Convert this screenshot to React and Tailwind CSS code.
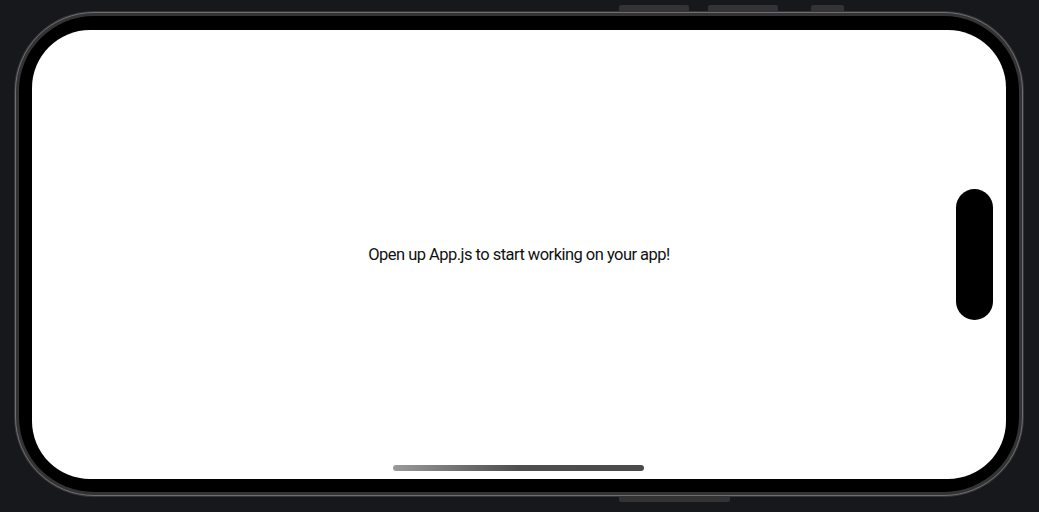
export default function App() {
  return (
    <div className="w-[1039px] h-[512px] bg-[#17181b] overflow-hidden relative pt-[11px] pl-[14px]">
      {/* hardware buttons on the frame edges */}
      <div className="absolute top-[5px] left-[619px] flex items-end">
        <div className="w-[70px] h-[7px] rounded-t-[2px] bg-[#333336]" />
        <div className="w-[70px] h-[7px] rounded-t-[2px] bg-[#333336] ml-[19px]" />
        <div className="w-[33px] h-[7px] rounded-t-[2px] bg-[#333336] ml-[33px]" />
      </div>
      <div className="absolute top-[496px] left-[619px] w-[111px] h-[6px] rounded-b-[2px] bg-[#333336]" />
      <div className="w-[1010px] h-[486px] rounded-[80px] bg-[#353537] p-[1px]">
        <div className="w-full h-full rounded-[79px] border border-[#6e6e70] bg-[#333335] p-[3px]">
          <div className="w-full h-full rounded-[75px] bg-black pt-[14px] px-[13px] pb-[13px]">
            <div className="w-full h-full rounded-[58px] bg-white flex flex-col pt-[14px] pb-[8px]">
              <div className="flex-1 flex items-center">
                <div className="w-[50px]" />
                <div className="flex-1 flex justify-center">
                  <span
                    className="text-[16.5px] tracking-[-0.53px] text-[#111] leading-5"
                    style={{ fontFamily: 'Roboto, "Liberation Sans", sans-serif' }}
                  >
                    Open up App.js to start working on your app!
                  </span>
                </div>
                <div className="w-[50px] flex">
                  <div className="w-[37px] h-[131px] rounded-full bg-black" />
                </div>
              </div>
              <div className="self-center w-[251px] h-[6px] rounded-full bg-gradient-to-r from-[#9a9a9a] via-[#4e4e4e] to-[#4a4a4a] ml-[-1px]" />
            </div>
          </div>
        </div>
      </div>
    </div>
  );
}
